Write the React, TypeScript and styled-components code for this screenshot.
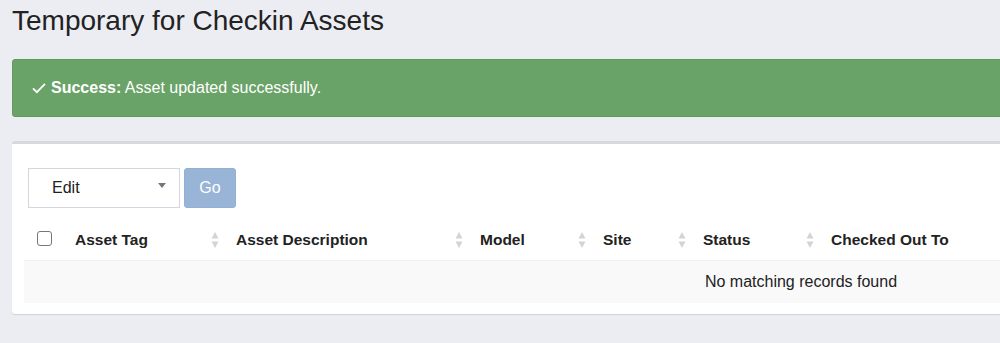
import React from "react";
import styled, { createGlobalStyle } from "styled-components";

const Global = createGlobalStyle`
  html, body { margin: 0; padding: 0; }
  body {
    background: #ecedf3;
    font-family: "Liberation Sans", Arial, Helvetica, sans-serif;
    color: #333;
    overflow: hidden;
    width: 1000px;
    height: 343px;
  }
`;

const Page = styled.div`
  width: 1600px;
  padding: 0 12px;
  box-sizing: border-box;
`;

const Title = styled.h1`
  margin: 0;
  padding-top: 4px;
  font-size: 28px;
  line-height: 34px;
  font-weight: 400;
  color: #222;
`;

const Alert = styled.div`
  margin-top: 21px;
  height: 58px;
  box-sizing: border-box;
  background: #6aa368;
  border: 1px solid #62995f;
  border-radius: 3px;
  color: #fff;
  font-size: 16px;
  display: flex;
  align-items: center;
  padding-left: 19px;
  gap: 5px;
`;

const Strong = styled.strong`
  font-weight: 700;
`;

const Panel = styled.section`
  margin-top: 24px;
  background: #fff;
  border-top: 3px solid #d6d8de;
  border-radius: 3px;
  box-shadow: 0 1px 1px rgba(0, 0, 0, 0.12);
  padding: 24px 12px 11px 12px;
`;

const Toolbar = styled.div`
  display: flex;
  gap: 4px;
  margin-left: 4px;
`;

const Select = styled.div`
  width: 152px;
  height: 40px;
  box-sizing: border-box;
  border: 1px solid #d2d6de;
  display: flex;
  align-items: center;
  justify-content: space-between;
  padding: 0 13px 0 23px;
  font-size: 16px;
  color: #222;
`;

const Caret = styled.span`
  width: 0;
  height: 0;
  border-left: 4px solid transparent;
  border-right: 4px solid transparent;
  border-top: 5px solid #777;
  margin-top: -6px;
`;

const GoButton = styled.button`
  width: 52px;
  height: 40px;
  border: 1px solid #93afd2;
  background: #98b4d6;
  color: #fff;
  border-radius: 3px;
  font-family: inherit;
  font-size: 16px;
  padding: 0;
`;

const Table = styled.table`
  margin-top: 12px;
  width: 1554px;
  table-layout: fixed;
  border-collapse: collapse;
  font-size: 16px;
`;

const Th = styled.th<{ $w?: number }>`
  width: ${(p) => (p.$w ? `${p.$w}px` : "auto")};
  box-sizing: border-box;
  height: 40px;
  padding: 0 0 0 12px;
  text-align: left;
  font-weight: 700;
  font-size: 15.5px;
  color: #222;
  position: relative;
  border-bottom: 1px solid #f0f0f0;
  vertical-align: middle;
`;

const CheckTh = styled.th`
  width: 39px;
  box-sizing: border-box;
  height: 40px;
  padding: 0 0 0 13px;
  text-align: left;
  border-bottom: 1px solid #f0f0f0;
  vertical-align: middle;
`;

const Checkbox = styled.span`
  display: block;
  width: 13px;
  height: 13px;
  border: 1px solid #777;
  border-radius: 3px;
  margin-top: -3px;
`;

const SortIcon = styled.svg`
  position: absolute;
  right: 5px;
  top: 50%;
  margin-top: -9px;
`;

const EmptyCell = styled.td`
  height: 42px;
  background: #f9f9f9;
  text-align: center;
  color: #222;
  padding: 0;
`;

const Sort = () => (
  <SortIcon width="8" height="18" viewBox="0 0 8 18">
    <path d="M4 1 L7.5 7.5 H0.5 Z" fill="#d4d4d4" />
    <path d="M4 17 L7.5 10.5 H0.5 Z" fill="#d4d4d4" />
  </SortIcon>
);

const cols = [
  { label: "Asset Tag", w: 161 },
  { label: "Asset Description", w: 244 },
  { label: "Model", w: 123 },
  { label: "Site", w: 100 },
  { label: "Status", w: 128 },
  { label: "Checked Out To", w: 0 },
];

export default function App() {
  return (
    <>
      <Global />
      <Page>
        <Title>Temporary for Checkin Assets</Title>
        <Alert>
          <svg width="14" height="12" viewBox="0 0 14 12">
            <path d="M1 6.3 L4.9 10.2 L13 1.8" stroke="#fff" strokeWidth="1.8" fill="none" />
          </svg>
          <span>
            <Strong>Success:</Strong> Asset updated successfully.
          </span>
        </Alert>
        <Panel>
          <Toolbar>
            <Select>
              <span>Edit</span>
              <Caret />
            </Select>
            <GoButton>Go</GoButton>
          </Toolbar>
          <Table>
            <thead>
              <tr>
                <CheckTh>
                  <Checkbox />
                </CheckTh>
                {cols.map((c, i) => (
                  <Th key={c.label} $w={c.w}>
                    {c.label}
                    {i < cols.length - 1 && <Sort />}
                  </Th>
                ))}
              </tr>
            </thead>
            <tbody>
              <tr>
                <EmptyCell colSpan={7}>No matching records found</EmptyCell>
              </tr>
            </tbody>
          </Table>
        </Panel>
      </Page>
    </>
  );
}
